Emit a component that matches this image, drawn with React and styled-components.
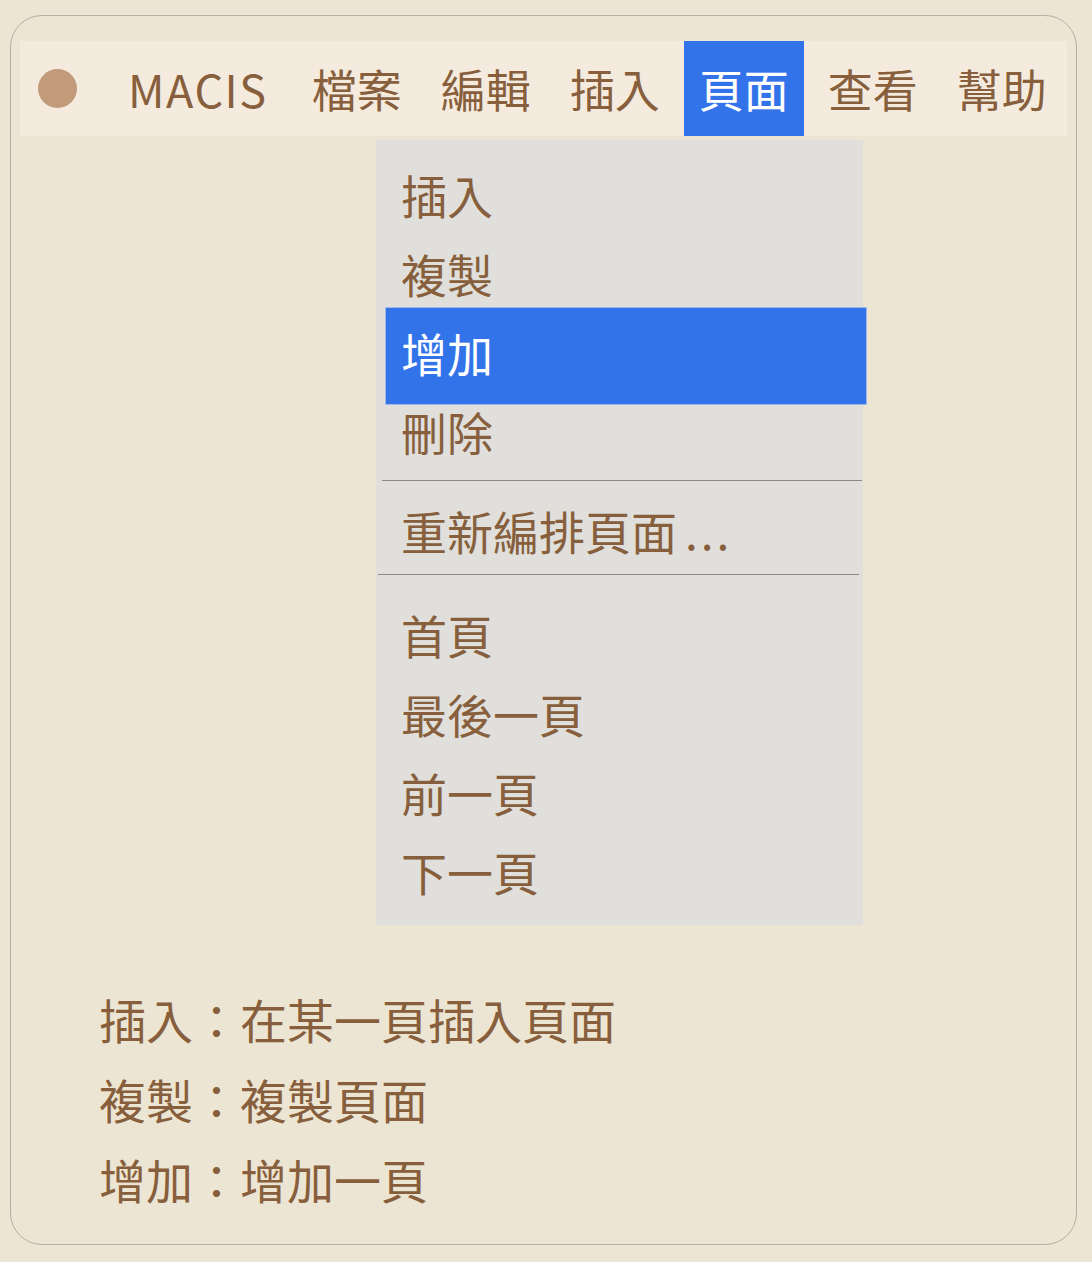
import React from 'react';
import styled, { createGlobalStyle } from 'styled-components';

const GlobalStyle = createGlobalStyle`
  html, body {
    margin: 0;
    padding: 0;
    background: #ede5d3;
  }
  body {
    font-family: "Noto Sans CJK TC", "Noto Sans", sans-serif;
    color: #875f3c;
  }
`;

const Page = styled.div`
  padding: 15px 15px 16px 10px;
`;

const Window = styled.div`
  height: 1230px;
  box-sizing: border-box;
  border: 1px solid #b4afa4;
  border-radius: 32px;
  padding: 25px 9px 0 9px;
`;

const MenuBar = styled.div`
  height: 95px;
  background: #f4ebde;
  display: flex;
  align-items: stretch;
  padding-left: 18px;
  gap: 9px;
`;

const Dot = styled.div`
  flex-shrink: 0;
  align-self: center;
  width: 39px;
  height: 39px;
  border-radius: 50%;
  background: #c29b7a;
  margin-right: 27px;
`;

const MenuItem = styled.div`
  flex-shrink: 0;
  white-space: nowrap;
  display: flex;
  align-items: center;
  padding: 0 15px;
  font-size: 45px;
  letter-spacing: ${p => (p.brand ? '1.5px' : '0')};
  color: ${p => (p.active ? '#ffffff' : '#875f3c')};
  background: ${p => (p.active ? '#3273e9' : 'transparent')};
  margin-right: ${p => (p.brand ? '5px' : '0')};
`;

const Dropdown = styled.div`
  width: 487px;
  margin: 4px 0 0 356px;
  background: #e0dfdb;
  padding-bottom: 14px;
`;

const Group = styled.div`
  padding-top: ${p => p.top}px;
  padding-bottom: ${p => p.bottom || 0}px;
`;

const Item = styled.div`
  position: relative;
  height: 79px;
  line-height: 79px;
  padding-left: 25px;
  font-size: 46px;
  white-space: nowrap;
  color: ${p => (p.selected ? '#ffffff' : '#875f3c')};

  ${p =>
    p.selected &&
    `
    &::before {
      content: "";
      position: absolute;
      left: 10px;
      right: -3px;
      top: -5px;
      bottom: -12px;
      background: #3273e9;
      box-shadow: 0 0 0 1px #9fb8e8;
      z-index: 0;
    }
  `}

  span {
    position: relative;
    z-index: 1;
  }
`;

const Ellipsis = styled.span`
  margin-left: 8px;
  letter-spacing: 3px;
`;

const Separator = styled.div`
  height: 1px;
  background: #8a8a88;
  margin: ${p => p.margin};
`;

const Notes = styled.div`
  margin-top: 54px;
  padding-left: 79px;
`;

const Note = styled.div`
  font-size: 47px;
  line-height: 80px;
`;

const topMenu = ['檔案', '編輯', '插入', '頁面', '查看', '幫助'];

export default function App() {
  return (
    <>
      <GlobalStyle />
      <Page>
        <Window>
          <MenuBar>
            <Dot />
            <MenuItem brand>MACIS</MenuItem>
            {topMenu.map(label => (
              <MenuItem key={label} active={label === '頁面'}>
                {label}
              </MenuItem>
            ))}
          </MenuBar>

          <Dropdown>
            <Group top={15} bottom={9}>
              <Item><span>插入</span></Item>
              <Item><span>複製</span></Item>
              <Item selected><span>增加</span></Item>
              <Item><span>刪除</span></Item>
            </Group>
            <Separator margin="0 1px 0 6px" />
            <Group top={10} bottom={4}>
              <Item><span>重新編排頁面<Ellipsis>...</Ellipsis></span></Item>
            </Group>
            <Separator margin="0 4px 0 2px" />
            <Group top={20}>
              <Item><span>首頁</span></Item>
              <Item><span>最後一頁</span></Item>
              <Item><span>前一頁</span></Item>
              <Item><span>下一頁</span></Item>
            </Group>
          </Dropdown>

          <Notes>
            <Note>插入：在某一頁插入頁面</Note>
            <Note>複製：複製頁面</Note>
            <Note>增加：增加一頁</Note>
          </Notes>
        </Window>
      </Page>
    </>
  );
}
